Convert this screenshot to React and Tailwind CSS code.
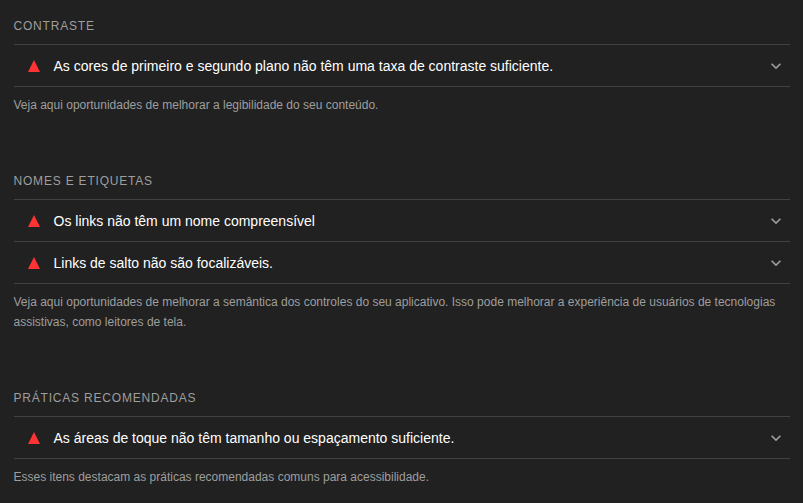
import React from 'react';

const groups = [
  {
    title: 'Contraste',
    audits: ['As cores de primeiro e segundo plano não têm uma taxa de contraste suficiente.'],
    description: 'Veja aqui oportunidades de melhorar a legibilidade do seu conteúdo.',
  },
  {
    title: 'Nomes e etiquetas',
    audits: ['Os links não têm um nome compreensível', 'Links de salto não são focalizáveis.'],
    description:
      'Veja aqui oportunidades de melhorar a semântica dos controles do seu aplicativo. Isso pode melhorar a experiência de usuários de tecnologias assistivas, como leitores de tela.',
  },
  {
    title: 'Práticas recomendadas',
    audits: ['As áreas de toque não têm tamanho ou espaçamento suficiente.'],
    description: 'Esses itens destacam as práticas recomendadas comuns para acessibilidade.',
  },
];

const AuditRow = ({ title }) => (
  <button className="flex h-[42px] w-full items-center border-b border-[#424242] pt-px pr-1 pl-[14.5px] text-left">
    <svg className="mr-[13.5px] shrink-0" width="12" height="12" viewBox="0 0 12 12" fill="#ff3333">
      <path d="M6 0L12 12H0Z" />
    </svg>
    <span className="flex-1 text-sm text-white">{title}</span>
    <svg className="shrink-0" width="20" height="20" viewBox="0 0 24 24" fill="#9e9e9e">
      <path d="M16.59 8.59L12 13.17 7.41 8.59 6 10l6 6 6-6z" />
    </svg>
  </button>
);

const AuditGroup = ({ title, audits, description }) => (
  <section>
    <h3 className="h-7 border-b border-[#424242] pt-px text-xs leading-4 tracking-[0.8px] text-[#9e9e9e] uppercase">
      {title}
    </h3>
    {audits.map((audit) => (
      <AuditRow key={audit} title={audit} />
    ))}
    <p className="pt-2 text-xs leading-5 text-[#9e9e9e]">{description}</p>
  </section>
);

export default function App() {
  return (
    <main className="flex h-[503px] flex-col gap-[57px] overflow-hidden bg-[#212121] pt-[17px] pr-[13px] pl-[13.5px] font-['Liberation_Sans',Arial,sans-serif]">
      {groups.map((group) => (
        <AuditGroup key={group.title} {...group} />
      ))}
    </main>
  );
}
